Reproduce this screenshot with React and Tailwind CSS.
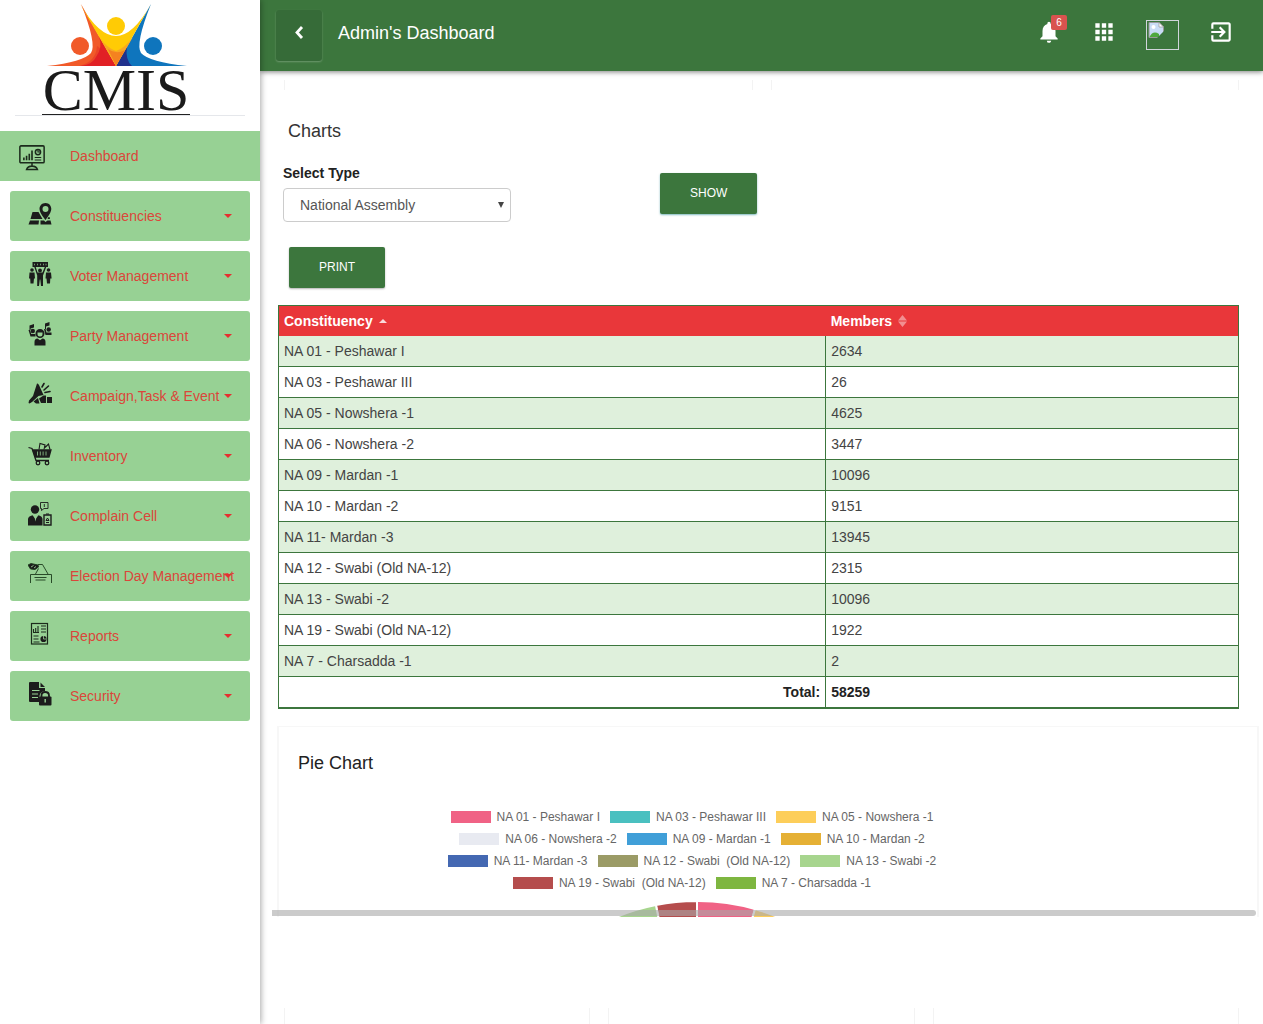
import React, { useState } from 'react';
import { MdApps, MdExitToApp, MdNotifications } from 'react-icons/md';

const rows = [
    { label: 'NA 01 - Peshawar I', members: 2634 },
    { label: 'NA 03 - Peshawar III', members: 26 },
    { label: 'NA 05 - Nowshera -1', members: 4625 },
    { label: 'NA 06 - Nowshera -2', members: 3447 },
    { label: 'NA 09 - Mardan -1', members: 10096 },
    { label: 'NA 10 - Mardan -2', members: 9151 },
    { label: 'NA 11- Mardan -3', members: 13945 },
    { label: 'NA 12 - Swabi (Old NA-12)', members: 2315 },
    { label: 'NA 13 - Swabi -2', members: 10096 },
    { label: 'NA 19 - Swabi (Old NA-12)', members: 1922 },
    { label: 'NA 7 - Charsadda -1', members: 2 },
];

const legend = [
    [
        { label: 'NA 01 - Peshawar I', color: 'bg-[#f06285]' },
        { label: 'NA 03 - Peshawar III', color: 'bg-[#4ac0c0]' },
        { label: 'NA 05 - Nowshera -1', color: 'bg-[#fdce5a]' },
    ],
    [
        { label: 'NA 06 - Nowshera -2', color: 'bg-[#e8eaf1]' },
        { label: 'NA 09 - Mardan -1', color: 'bg-[#409fd8]' },
        { label: 'NA 10 - Mardan -2', color: 'bg-[#e5b035]' },
    ],
    [
        { label: 'NA 11- Mardan -3', color: 'bg-[#4468b2]' },
        { label: 'NA 12 - Swabi  (Old NA-12)', color: 'bg-[#9b9b66]' },
        { label: 'NA 13 - Swabi -2', color: 'bg-[#a7d58e]' },
    ],
    [
        { label: 'NA 19 - Swabi  (Old NA-12)', color: 'bg-[#b54d4d]' },
        { label: 'NA 7 - Charsadda -1', color: 'bg-[#7eb640]' },
    ],
];

const Logo = () => (
    <svg className="h-[131px] w-[150px] shrink-0" viewBox="0 0 150 131" role="img" aria-label="CMIS">
        <path d="M40 4 L75 66 H6 Q42 62 50 53 Q56 44 40 4Z" fill="#f15a29" />
        <path d="M58 36 L75 66 H40 Q52 64 55 57 Q62 48 58 36Z" fill="#e01f26" opacity=".95" />
        <path d="M38 66 Q55 62 56 46 Q60 48 75 66 L66 66Z" fill="#e01f26" opacity=".35" />
        <path d="M110 4 L75 66 H146 Q108 62 100 53 Q94 44 110 4Z" fill="#0f75bd" />
        <path d="M86 46 L75 66 H91 Q84 60 86 46Z" fill="#21318d" />
        <path d="M39 4 Q58 36 75 36 Q92 36 110 4 L75 66Z" fill="#ffcb05" />
        <path d="M59 38 Q66 48 75 51 Q84 48 92 37 L75 66Z" fill="#f7a823" />
        <path d="M67 49 Q75 55 84 50 L75 66Z" fill="#f58220" />
        <circle cx="75" cy="26" r="9" fill="#ffcb05" />
        <circle cx="39" cy="46" r="9" fill="#f15a29" />
        <circle cx="112" cy="46" r="9" fill="#0f75bd" />
        <text x="75" y="110" textAnchor="middle" fontSize="60" fontFamily="'Liberation Serif', serif" fill="#1a1a1a">
            CMIS
        </text>
        <path d="M1 114.5 H149" stroke="#222" />
    </svg>
);

const icons = {
    dashboard: (
        <g fill="none" stroke="#1c2b1c" strokeWidth="1.4">
            <rect x=".8" y=".8" width="22.4" height="15.6" rx="1" />
            <path d="M4.5 14V11.5M7 14V10M9.5 14V8M12 14V5" strokeWidth="1.5" />
            <circle cx="17.5" cy="6.5" r="2.4" />
            <path d="M17.5 4V6.5H20M14.5 11.5H20.5M14.5 13.8H20.5" strokeWidth="1" />
            <path d="M12 16.5V19M7 22.6Q8 19.5 12 19.5Q16 19.5 17 22.6Z" />
        </g>
    ),
    constituencies: (
        <g fill="#1c1c1c">
            <path fillRule="evenodd" d="M17.5 1C13.8 1 11.5 3.8 11.5 7C11.5 11 17.5 18 17.5 18S23.3 11 23.3 7C23.3 3.8 21.2 1 17.5 1ZM17.5 4A3 3 0 1 1 17.5 10A3 3 0 1 1 17.5 4Z" />
            <path d="M4.5 10H10.5L14.5 17H2.5ZM2 18.5H11L10.5 22.5H.5ZM12.5 18.5H16L17.5 20L19.5 18.5H22.5L23.5 22.5H12.5ZM20.5 15H21.5L22 17H19.5Z" />
        </g>
    ),
    voters: (
        <g fill="#1c1c1c">
            <path d="M4.5 0H20V5H4.5Z" />
            <path d="M6.5 3.3V1.7M9.5 3.3V1.7M12.5 3.3V1.7M15.5 3.3V1.7M18 3.3V1.7" stroke="#97d194" strokeWidth=".7" />
            <circle cx="12" cy="8.5" r="1.9" />
            <circle cx="4" cy="8" r="1.8" />
            <circle cx="20.5" cy="8" r="1.8" />
            <path d="M6.3 5H7.7L9.5 10.5H14.5L16.8 5H18.2L15 13.5V24H13L12.3 17.5H11.8L11 24H9.2V13.5ZM1.5 10.5H6.5L7 16.5H6L5.5 21.5H2.5L2.2 16.5H1ZM18 10.5H23L23.6 16.5H22.3L22 21.5H19L18.5 16.5H17.5Z" />
        </g>
    ),
    party: (
        <g fill="#1c1c1c">
            <path d="M1.5 3.5L6 2V5.5L2.6 6.5V8H1.5ZM17 1.5L21.5 0V3.5L18 4.5V7H17Z" />
            <path fillRule="evenodd" d="M12 7A4.2 4.2 0 0 1 12 16A4.2 4.2 0 0 1 12 7ZM12 10.5H9.5V12A2.5 2.5 0 0 0 14.5 12V10.5Z" />
            <path d="M6.5 23.5V20Q6.5 17 9.5 16.6L12 18.3L14.5 16.6Q17.5 17 17.5 20V23.5Z" />
            <circle cx="4.8" cy="9" r="2.2" />
            <circle cx="20.7" cy="7.5" r="2.2" />
            <path d="M.5 8L2 8L3.3 12H7.5V14.5H2.5ZM16 7H17.5L18.5 10.5H23.5V13H17.5Z" />
        </g>
    ),
    campaign: (
        <g fill="#1c1c1c">
            <path d="M9 1.5Q10 1 11 3L15.5 13L10.5 14L4 20L1.5 21.5Q0 21 1 18.5L5 14Z" />
            <path d="M5.5 19.5L10 16L11.5 21.5H8ZM11 16.5L15.5 13.5H18V21H13ZM19 15H24V21H19Z" />
            <path d="M14 5L16 1.5M16 8L20.5 4M17 10.5L22 9.5" stroke="#1c1c1c" strokeWidth="1.6" strokeLinecap="round" />
        </g>
    ),
    inventory: (
        <g fill="none" stroke="#1c1c1c" strokeWidth="1.3">
            <path d="M.5 5.5L4 6.5L8 18.5H21" />
            <path d="M5 8H23L21 15H7.5Z" fill="#1c1c1c" />
            <path d="M9.5 9.5V13.5M12.3 9.5V13.5M15.1 9.5V13.5M18 9.5V13.5" stroke="#97d194" strokeWidth=".8" />
            <path d="M11 7.5L12 1.5L17 3L16 7.5M17 5.5L20.5 2L22 7.5" strokeWidth="1.1" />
            <circle cx="10" cy="21" r="1.8" />
            <circle cx="19" cy="21" r="1.8" />
        </g>
    ),
    complain: (
        <g fill="#1c1c1c">
            <circle cx="7" cy="7.5" r="4.2" />
            <path d="M0 23.5V17Q0 14.5 4.5 13.2L7.5 17L10.5 13.2Q14.5 14.5 14.5 17V23.5Z" />
            <path d="M7.5 13.5L8.5 15L7.5 19.5L6.5 15Z" fill="#97d194" />
            <g fill="none" stroke="#1c1c1c">
                <path d="M12.5 .5H20V6.5H16L13.5 8.5V6.5H12.5ZM16.3 2V5" strokeWidth=".9" />
                <path d="M16 13H23V23H16Z" strokeWidth="1.4" />
                <path d="M18 12H21M18 20.5H21M18 18.5L19.5 16L21 18.5Z" />
            </g>
        </g>
    ),
    election: (
        <g fill="none" stroke="#1c3b1c" strokeWidth=".9">
            <path d="M2.5 21V12.5H23.5V21M6.5 15.5H18.5M7.5 18H17.5" />
            <path d="M7.5 12L10.5 6.5M10 2.5H14.5L20 12" />
            <path d="M0 3L3 1.5L10 3L10.5 5L7 7.5L2.5 7Z" fill="#1c1c1c" />
            <path d="M3 5L5.5 3.5M6 6L8 4.5" stroke="#97d194" />
        </g>
    ),
    reports: (
        <g fill="none" stroke="#1c2b1c">
            <rect x="3.5" y="1.5" width="16" height="20.5" strokeWidth="1.2" />
            <path d="M5.5 10V7M7.7 10V6M10 10V4M5 10.5H11M13 4H18M13 7H18M13 10H18M5.5 14H10.5M5.5 17H10.5M5.5 20H11.5" strokeWidth="1.1" />
            <circle cx="15.5" cy="17" r="3.1" fill="#1c1c1c" stroke="none" />
            <path d="M15.5 14V17H18.5" stroke="#97d194" strokeWidth=".8" />
        </g>
    ),
    security: (
        <g fill="#1c1c1c">
            <path d="M1 1Q1 0 2 0H11V6H17V9Q12 9.5 11.5 14L11 20H2Q1 20 1 19ZM12.5 .5L17 5H12.5Z" />
            <path d="M4 8.5H11.5M4 12H10M4 15.5H10" stroke="#97d194" strokeWidth="1.2" />
            <path d="M13.5 15V13.5Q13.5 10 17 10Q21 10 21 13.5V15" fill="none" stroke="#1c1c1c" strokeWidth="1.8" />
            <rect x="11" y="14.5" width="12.5" height="9" rx="1" />
            <path d="M17.2 17V20.5" stroke="#97d194" strokeWidth="1.4" />
        </g>
    ),
};

const menu = [
    { icon: 'constituencies', label: 'Constituencies' },
    { icon: 'voters', label: 'Voter Management' },
    { icon: 'party', label: 'Party Management' },
    { icon: 'campaign', label: 'Campaign,Task & Event' },
    { icon: 'inventory', label: 'Inventory' },
    { icon: 'complain', label: 'Complain Cell' },
    { icon: 'election', label: 'Election Day Management' },
    { icon: 'reports', label: 'Reports' },
    { icon: 'security', label: 'Security' },
];

const Sidebar = () => (
    <aside className="z-20 w-[260px] shrink-0 bg-white shadow-[1px_0_6px_rgba(0,0,0,0.35)]">
        <div className="mx-[15px] flex h-[116px] border-b border-gray-200 pl-[26px]">
            <Logo />
        </div>
        <nav className="mt-[15px] text-sm text-[#db463a]">
            <a href="#dashboard" className="flex h-[50px] items-center bg-[#97d194] pl-[19px]">
                <svg className="mt-1 mr-[25px] h-[26px] w-[26px]" viewBox="0 0 24 24">{icons.dashboard}</svg>
                Dashboard
            </a>
            <ul className="mx-[10px] mt-[10px] space-y-[10px]">
                {menu.map((item) => (
                    <li key={item.icon}>
                        <a href={`#${item.icon}`} className="flex h-[50px] items-center rounded-[3px] bg-[#97d194] px-[18px]">
                            <svg className="mr-[18px] mb-1 h-6 w-6 shrink-0" viewBox="0 0 24 24">{icons[item.icon]}</svg>
                            <span className="min-w-0 flex-1 whitespace-nowrap">{item.label}</span>
                            <svg className="h-1 w-2 shrink-0" viewBox="0 0 8 4"><path d="M0 0H8L4 4Z" fill="#e53030" /></svg>
                        </a>
                    </li>
                ))}
            </ul>
        </nav>
    </aside>
);

const Header = () => (
    <header className="z-10 flex h-[71px] shrink-0 items-start justify-between bg-[#3c763d] pr-[29px] pl-4 text-white shadow-[0_1px_5px_rgba(0,0,0,0.5)]">
        <div className="flex pt-[10px]">
            <button type="button" aria-label="Back" className="flex h-[51px] w-[46px] justify-center rounded-[3px] bg-[#366b38] pt-[10px] shadow-[0_1px_2px_rgba(255,255,255,0.25)]">
                <svg className="h-6 w-6" viewBox="0 0 24 24" fill="none" stroke="currentColor" strokeWidth="2.8">
                    <path d="M15 7L10 12.5L15 18" />
                </svg>
            </button>
            <h1 className="ml-4 text-lg leading-[46px]">Admin's Dashboard</h1>
        </div>
        <div className="flex gap-[29px] pt-[19px]">
            <button type="button" aria-label="Notifications" className="relative h-[26px]">
                <MdNotifications size={26} />
                <span className="absolute -top-1 left-[15px] h-[15px] w-4 rounded-[2px] bg-[#d9534f] text-center text-[10px] leading-[15px]">6</span>
            </button>
            <button type="button" aria-label="Apps" className="h-[26px]">
                <MdApps size={26} />
            </button>
            <button type="button" aria-label="Profile" className="mt-px flex h-[30px] w-[33px] items-start border border-gray-300 p-px">
                <svg className="h-4 w-4" viewBox="0 0 16 16">
                    <path d="M1 .5H11L15.5 5V15.5H1Z" fill="#c9dcf5" stroke="#9a9a9a" />
                    <path d="M1.5 15Q5 8 11 12V15Z" fill="#4fa83d" />
                    <circle cx="5.5" cy="5" r="2" fill="#fff" />
                    <path d="M11 .5V5H15.5Z" fill="#fff" stroke="#9a9a9a" strokeWidth=".7" />
                    <path d="M9 16L16 9V16Z" fill="#3c763d" />
                </svg>
            </button>
            <button type="button" aria-label="Log out" className="h-[26px]">
                <MdExitToApp size={26} />
            </button>
        </div>
    </header>
);

const MembersTable = () => (
    <table className="w-full table-fixed border-collapse border border-b-2 border-[#3c763d] text-sm leading-5 text-[#444]">
        <thead className="bg-[#e9373a] text-left text-white">
            <tr>
                <th className="h-[30px] w-[57%] px-[5px]">
                    Constituency
                    <svg className="mb-[3px] ml-[6px] inline h-1 w-2" viewBox="0 0 8 4"><path d="M0 4H8L4 0Z" fill="#fbdada" /></svg>
                </th>
                <th className="px-[5px]">
                    Members
                    <svg className="mb-[2px] ml-[6px] inline h-3 w-[9px]" viewBox="0 0 9 12"><path d="M0 5.5H9L4.5 0ZM0 6.5H9L4.5 12Z" fill="#f28f90" /></svg>
                </th>
            </tr>
        </thead>
        <tbody>
            {rows.map((row) => (
                <tr key={row.label} className="border-b border-[#3c763d] odd:bg-[#dff0dc]">
                    <td className="h-[31px] border-r border-[#3c763d] px-[5px]">{row.label}</td>
                    <td className="px-[5px]">{row.members}</td>
                </tr>
            ))}
        </tbody>
        <tfoot>
            <tr className="font-bold text-[#222]">
                <td className="h-[31px] border-r border-[#3c763d] px-[5px] text-right">Total:</td>
                <td className="px-[5px]">58259</td>
            </tr>
        </tfoot>
    </table>
);

const PieChart = () => (
    <section className="-mr-5 -ml-px h-[191px] overflow-hidden border-x-2 border-t border-[#f7f7f7] px-[19px] pt-6">
        <h2 className="text-lg leading-6 text-[#222]">Pie Chart</h2>
        <div className="mt-[31px] max-w-[788px]">
            {legend.map((line, i) => (
                <div key={i} className="flex h-[22px] items-center justify-center gap-[10px]">
                    {line.map((item) => (
                        <div key={item.label} className="flex items-center gap-[6px]">
                            <span className={`h-3 w-10 ${item.color}`} />
                            <span className="text-xs whitespace-pre text-[#666]">{item.label}</span>
                        </div>
                    ))}
                </div>
            ))}
            {/* only the top of the pie is inside the scroll area */}
            <svg className="mx-auto mt-2 h-4 w-[170px]" viewBox="-10 1 170 16">
                <g stroke="#fff" strokeWidth="2">
                    <path d="M80 210V0A210 210 0 0 1 138 8Z" fill="#f06285" />
                    <path d="M80 210L138 8A210 210 0 0 1 185 28Z" fill="#fdce5a" />
                    <path d="M80 210V0A210 210 0 0 0 38.9 4Z" fill="#b54d4d" />
                    <path d="M80 210L38.9 4A210 210 0 0 0 -25 28Z" fill="#a7d58e" />
                </g>
            </svg>
        </div>
    </section>
);

const App = () => {
    const [type, setType] = useState('National Assembly');

    return (
        <div className="flex min-h-screen bg-white font-['Liberation_Sans',Arial,sans-serif]">
            <Sidebar />
            <div className="flex min-w-0 flex-1 flex-col overflow-hidden">
                <Header />
                <main className="flex flex-1 flex-col pt-[9px] pr-6 pl-[18px]">
                    <div className="grid grid-cols-2 gap-[18px] pl-[6px]">
                        <div className="h-[10px] border-x border-[#f3f3f3]" />
                        <div className="h-[10px] border-x border-[#f3f3f3]" />
                    </div>

                    <h2 className="mt-[29px] pl-[10px] text-lg leading-6 text-[#333]">Charts</h2>
                    <div className="mt-5 flex gap-[149px] pl-[5px]">
                        <div className="w-[228px]">
                            <label htmlFor="type" className="block text-sm leading-5 font-bold text-[#222]">Select Type</label>
                            <div className="relative mt-[5px]">
                                <select
                                    id="type"
                                    value={type}
                                    onChange={(e) => setType(e.target.value)}
                                    className="h-[34px] w-full appearance-none rounded-[4px] border border-[#ccc] bg-white pl-4 text-sm text-[#555]"
                                >
                                    <option>National Assembly</option>
                                    <option>Provincial Assembly</option>
                                </select>
                                <svg className="pointer-events-none absolute top-[14px] right-[7px] h-[6px] w-[6px]" viewBox="0 0 6 6"><path d="M0 0H6L3 6Z" fill="#444" /></svg>
                            </div>
                        </div>
                        <button type="button" className="mt-[10px] h-[41px] rounded-[2px] bg-[#3c763d] px-[30px] pb-[2px] text-xs text-white shadow-[0_1px_2px_rgba(0,120,130,0.5)]">
                            SHOW
                        </button>
                    </div>
                    <button type="button" className="mt-[25px] ml-[11px] h-[41px] self-start rounded-[2px] bg-[#3c763d] px-[30px] pb-[2px] text-xs text-white shadow-[0_1px_2px_rgba(0,0,0,0.3)]">
                        PRINT
                    </button>

                    <div className="mt-[17px]">
                        <MembersTable />
                    </div>
                    <div className="relative mt-[17px]">
                        <PieChart />
                        <div className="absolute -right-[17px] bottom-[1px] -left-[6px] h-[6px] rounded-r-full bg-[#a8a8a8]/60" />
                    </div>

                    <div className="mt-[91px] grid min-h-4 flex-1 grid-cols-3 gap-[18px] pl-[6px]">
                        <div className="border-x border-[#f3f3f3]" />
                        <div className="border-x border-[#f3f3f3]" />
                        <div className="border-x border-[#f3f3f3]" />
                    </div>
                </main>
            </div>
        </div>
    );
};

export default App;
